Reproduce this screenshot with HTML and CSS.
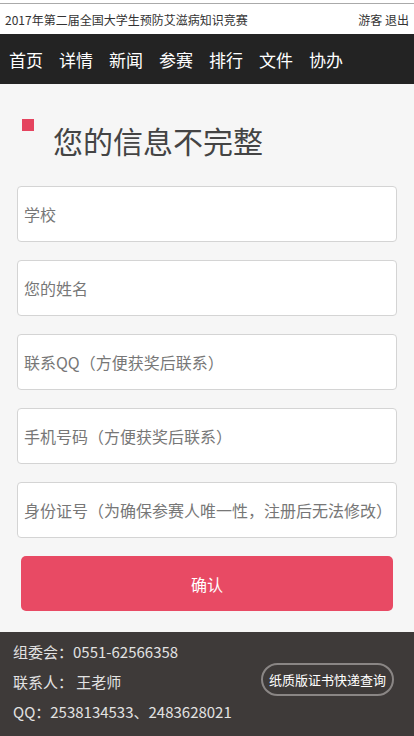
FILE: index.html
```html
<!DOCTYPE html>
<html lang="zh-CN">
<head>
<meta charset="utf-8">
<title>2017年第二届全国大学生预防艾滋病知识竞赛</title>
<link rel="stylesheet" href="styles.css">
</head>
<body>
<header class="topbar">
  <span class="site-title">2017年第二届全国大学生预防艾滋病知识竞赛</span>
  <span class="user-links"><a>游客</a> <a>退出</a></span>
</header>
<nav class="nav">
  <a>首页</a><a>详情</a><a>新闻</a><a>参赛</a><a>排行</a><a>文件</a><a>协办</a>
</nav>
<main class="main">
  <div class="heading">
    <span class="mark"></span>
    <h1 class="title">您的信息不完整</h1>
  </div>
  <form class="form">
    <input class="field" type="text" placeholder="学校">
    <input class="field" type="text" placeholder="您的姓名">
    <input class="field" type="text" placeholder="联系QQ（方便获奖后联系）">
    <input class="field" type="text" placeholder="手机号码（方便获奖后联系）">
    <input class="field" type="text" placeholder="身份证号（为确保参赛人唯一性，注册后无法修改）">
    <button class="submit" type="button">确认</button>
  </form>
</main>
<footer class="footer">
  <div class="contact">
    <p>组委会：0551-62566358</p>
    <p>联系人： 王老师</p>
    <p>QQ：2538134533、2483628021</p>
  </div>
  <a class="query">纸质版证书快递查询</a>
</footer>
</body>
</html>
```
FILE: styles.css
```css
* { box-sizing: border-box; }
html, body {
  margin: 0;
  padding: 0;
  background: #fff;
  font-family: "Noto Sans CJK SC", "Noto Sans", "Liberation Sans", sans-serif;
}
.topbar {
  margin-top: 3px;
  border-top: 1px solid #aaa;
  height: 31px;
  padding: 0 5px 0 5px;
  display: flex;
  justify-content: space-between;
  align-items: center;
  font-size: 12px;
  color: #333;
  background: #fff;
}
.user-links a { color: #333; }
.nav {
  background: #232323;
  height: 50px;
  display: flex;
  align-items: center;
  gap: 16px;
  padding-left: 9px;
}
.nav a {
  color: #fff;
  font-size: 17px;
  line-height: 1;
}
.main {
  background: #f6f6f6;
  padding: 35px 0 21px;
}
.heading {
  display: flex;
  align-items: flex-start;
  padding-left: 22px;
}
.mark {
  width: 12px;
  height: 12px;
  background: #e5445f;
  flex: none;
}
.title {
  margin: 0 0 0 19px;
  font-size: 30px;
  font-weight: normal;
  line-height: 40px;
  color: #444;
  position: relative;
  top: 1px;
}
.form {
  display: flex;
  flex-direction: column;
  gap: 18px;
  margin-top: 27px;
  padding: 0 17px;
}
.field {
  height: 56px;
  width: 100%;
  border: 1px solid #d4d4d4;
  border-radius: 4px;
  background: #fff;
  padding: 0 6px;
  font-family: inherit;
  font-size: 16px;
  color: #333;
}
.field::placeholder { color: #777; }
.submit {
  margin: 0 4px;
  height: 55px;
  border: none;
  border-radius: 5px;
  background: #e84a64;
  color: #fff;
  font-family: inherit;
  font-size: 16px;
}
.footer {
  background: #3e3a39;
  height: 105px;
  padding: 5px 20px 10px 13px;
  display: flex;
  justify-content: space-between;
  align-items: center;
}
.contact p {
  margin: 0;
  font-size: 15px;
  line-height: 30px;
  color: #e2e2e2;
}
.query {
  border: 2px solid #8a8685;
  border-radius: 17px;
  height: 33px;
  padding: 0 6px;
  display: flex;
  align-items: center;
  color: #fff;
  font-size: 13px;
  margin-bottom: 5px;
}
```
